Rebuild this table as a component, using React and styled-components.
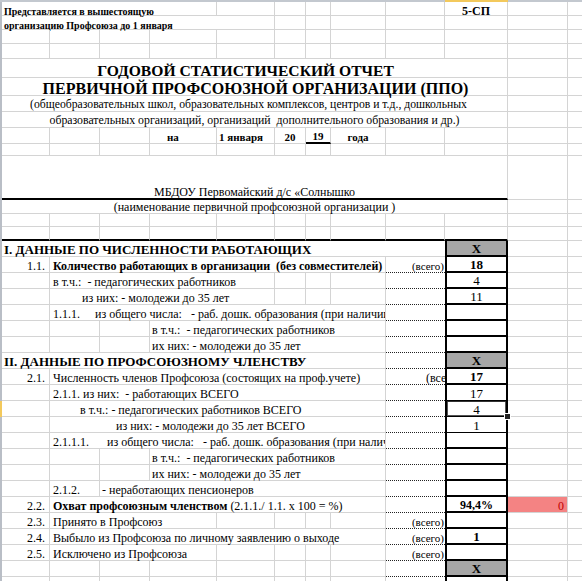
import React from 'react';
import styled, { createGlobalStyle, css } from 'styled-components';

// column widths: row-header strip, then A..L as in the sheet
const COLS = '2px 48px 50px 50px 67px 58px 31px 25px 55px 59px 63px 60px 60px';
const GRID = '#d4d4d4';
const SERIF = '"Liberation Serif", "Times New Roman", "DejaVu Serif", serif';

const GlobalStyle = createGlobalStyle`
  html, body {
    margin: 0;
    padding: 0;
    background: #fff;
  }
  body {
    font-family: ${SERIF};
    color: #000;
    overflow: hidden;
  }
`;

const Sheet = styled.div`
  width: 582px;
  height: 581px;
  overflow: hidden;
  font-family: ${SERIF};
`;

const HeadStrip = styled.div`
  display: grid;
  grid-template-columns: ${COLS};
  height: 2px;
`;

const HeadCell = styled.div`
  background: ${(p) => (p.$active ? '#f3c95c' : '#c3c8cf')};
`;

const Row = styled.div`
  display: grid;
  grid-template-columns: ${COLS};
  height: ${(p) => p.$h}px;
`;

const RowHead = styled.div`
  background: ${(p) => (p.$active ? '#f3c95c' : '#b9bec6')};
`;

const line = (v) => {
  if (v === 'thick') return '2px solid #000';
  if (v === 'ink') return '1px solid #000';
  if (v === 'dotted') return '1px dotted #222';
  if (v === 'none') return '0 none';
  return `1px solid ${GRID}`;
};

const Cell = styled.div`
  grid-column: ${(p) => p.$c + 1} / span ${(p) => p.$span};
  box-sizing: border-box;
  min-width: 0;
  position: relative;
  overflow-x: ${(p) => (p.$sel ? 'visible' : 'clip')};
  white-space: pre;
  display: flex;
  align-items: flex-end;
  justify-content: ${(p) =>
    p.$align === 'center' ? 'center' : p.$align === 'right' ? 'flex-end' : 'flex-start'};
  padding: 0 ${(p) => p.$padR}px ${(p) => p.$padB}px ${(p) => p.$pad}px;
  border-right: ${(p) => line(p.$right)};
  border-bottom: ${(p) => line(p.$under)};
  font-family: ${SERIF};
  font-size: ${(p) => p.$size}px;
  font-weight: ${(p) => (p.$bold ? 700 : 400)};
  line-height: ${(p) => p.$lh};
  background: ${(p) => p.$fill || 'transparent'};
  color: ${(p) => p.$color || '#000'};
  ${(p) =>
    p.$box &&
    css`
      border-left: 2px solid #000;
      border-right: 2px solid #000;
    `}
  ${(p) =>
    p.$sel &&
    css`
      z-index: 1;
      box-shadow: inset 0 1px 0 #333, inset 0 0 0 1px #555;
    `}
`;

const Handle = styled.span`
  position: absolute;
  right: -5px;
  bottom: -4px;
  width: 5px;
  height: 5px;
  background: #222;
  border: 1px solid #fff;
  z-index: 2;
`;

const T = (c, span, text, o = {}) => ({ c, span, text, ...o });
const X = T(10, 1, 'X', { bold: true, size: 13, align: 'center', fill: '#a6a6a6' });
const num = (n, o = {}) => T(10, 1, n, { size: 13, align: 'center', ...o });
const vsego = T(9, 1, '(всего)', { size: 11, align: 'right', padR: 1 });
const no = (n) => T(1, 1, n, { align: 'right', padR: 4 });

const topRows = [
  {
    h: 14,
    cells: [
      T(1, 4, 'Представляется в вышестоящую', { bold: true, size: 10, lh: 0.6 }),
      T(10, 1, '5-СП', { bold: true, size: 12, align: 'center', lh: 0.7 }),
    ],
  },
  { h: 14, cells: [T(1, 5, 'организацию Профсоюза до 1 января', { bold: true, size: 10, lh: 0.6 })] },
  { h: 14 },
  { h: 15 },
  {
    h: 19,
    cells: [
      T(1, 10, 'ГОДОВОЙ СТАТИСТИЧЕСКИЙ ОТЧЕТ', {
        bold: true,
        size: 15.6,
        align: 'center',
        padR: 20,
        lh: 0.75,
      }),
    ],
  },
  {
    h: 18,
    cells: [
      T(1, 10, 'ПЕРВИЧНОЙ ПРОФСОЮЗНОЙ ОРГАНИЗАЦИИ (ППО)', {
        bold: true,
        size: 16,
        align: 'center',
        padR: 0,
        lh: 0.75,
      }),
    ],
  },
  {
    h: 16,
    cells: [
      T(1, 10, '(общеобразовательных школ, образовательных комплексов, центров и т.д., дошкольных', {
        align: 'center',
        padR: 14,
        size: 11.7,
      }),
    ],
  },
  {
    h: 16,
    cells: [
      T(1, 10, 'образовательных организаций, организаций  дополнительного образования и др.)', {
        align: 'center',
        size: 11.8,
      }),
    ],
  },
  {
    h: 16,
    cells: [
      T(4, 1, 'на', { bold: true, size: 11, pad: 17 }),
      T(5, 1, '1 января', { bold: true, size: 11 }),
      T(6, 1, '20', { bold: true, size: 11, align: 'center' }),
      T(7, 1, '19', { bold: true, size: 11, align: 'center', under: 'thick' }),
      T(8, 1, 'года', { bold: true, size: 11, align: 'center' }),
    ],
  },
  { h: 12 },
  {
    h: 44,
    cells: [T(1, 10, 'МБДОУ Первомайский д/с «Солнышко', { align: 'center', under: 'thick', lh: 0.8 })],
  },
  { h: 14, cells: [T(1, 10, '(наименование первичной профсоюзной организации )', { align: 'center' })] },
  { h: 13 },
  { h: 14, rule: true },
];

const dataRows = [
  { cells: [T(1, 9, 'I. ДАННЫЕ ПО ЧИСЛЕННОСТИ РАБОТАЮЩИХ', { bold: true, size: 13 }), X] },
  {
    cells: [
      no('1.1.'),
      T(2, 7, 'Количество работающих в организации  (без совместителей)', { bold: true, pad: 3 }),
      vsego,
      num('18', { bold: true }),
    ],
  },
  { cells: [T(2, 4, 'в т.ч.:  - педагогических работников', { pad: 3 }), num('4')] },
  { cells: [T(2, 4, 'из них: - молодежи до 35 лет', { pad: 32 }), num('11')] },
  {
    cells: [
      T(2, 7, '1.1.1.     из общего числа:   - раб. дошк. образования (при наличии)', { pad: 3 }),
    ],
  },
  { cells: [T(4, 5, 'в т.ч.:  - педагогических работников')] },
  { cells: [T(4, 5, 'их них: - молодежи до 35 лет')] },
  { cells: [T(1, 8, 'II. ДАННЫЕ ПО ПРОФСОЮЗНОМУ ЧЛЕНСТВУ', { bold: true, size: 13 }), X] },
  {
    cells: [
      no('2.1.'),
      T(2, 7, 'Численность членов Профсоюза (состоящих на проф.учете)', { pad: 3 }),
      T(9, 1, '(всего)', { pad: 40 }),
      num('17', { bold: true }),
    ],
  },
  { cells: [T(2, 7, '2.1.1. из них:  - работающих ВСЕГО', { pad: 3 }), num('17', { under: 'ink' })] },
  {
    active: true,
    cells: [
      T(2, 7, 'в т.ч.: - педагогических работников ВСЕГО', { pad: 30 }),
      num('4', { sel: true, under: 'ink' }),
    ],
  },
  { cells: [T(2, 7, 'из них: - молодежи до 35 лет ВСЕГО', { pad: 66 }), num('1', { under: 'ink' })] },
  {
    cells: [
      T(2, 7, '2.1.1.1.      из общего числа:   - раб. дошк. образования (при наличии)', { pad: 3 }),
    ],
  },
  { cells: [T(4, 5, 'в т.ч.:  - педагогических работников')] },
  { cells: [T(4, 5, 'их них: - молодежи до 35 лет')] },
  { cells: [T(2, 1, '2.1.2.', { pad: 3 }), T(3, 6, '- неработающих пенсионеров')] },
  {
    cells: [
      no('2.2.'),
      T(
        2,
        7,
        <>
          <b>Охват профсоюзным членством</b> (2.1.1./ 1.1. х 100 = %)
        </>,
        { pad: 3 }
      ),
      num('94,4%', { bold: true, size: 12 }),
      T(11, 1, '0', { fill: '#f48383', color: '#c00000', align: 'right', padR: 3, right: 'fill' }),
    ],
  },
  { cells: [no('2.3.'), T(2, 3, 'Принято в Профсоюз', { pad: 3 }), vsego] },
  {
    cells: [
      no('2.4.'),
      T(2, 7, 'Выбыло из Профсоюза по личному заявлению о выходе', { pad: 3 }),
      vsego,
      num('1', { bold: true }),
    ],
  },
  { cells: [no('2.5.'), T(2, 3, 'Исключено из Профсоюза', { pad: 3 }), vsego] },
  { cells: [X] },
  { cells: [num('', { under: 'none' })] },
];

function fillRow(row, data) {
  const specs = row.cells || [];
  const out = [];
  let c = 1;
  while (c <= 12) {
    const s = specs.find((x) => x.c === c);
    const cell = s ? { ...s } : { c, span: 1 };
    const end = cell.c + cell.span - 1;
    if (row.rule && cell.c <= 10) cell.under = cell.under || 'thick';
    if (data) {
      if (cell.c === 10) {
        cell.box = true;
        cell.under = cell.under || 'thick';
      } else if (end === 9) {
        cell.right = 'none';
        if (cell.c === 9) cell.under = cell.under || 'dotted';
      }
    }
    out.push(cell);
    c = end + 1;
  }
  return out;
}

function SheetRow({ row, h, data }) {
  return (
    <Row $h={h}>
      <RowHead $active={row.active} />
      {fillRow(row, data).map((cell) => (
        <Cell
          key={cell.c}
          $c={cell.c}
          $span={cell.span}
          $align={cell.align}
          $pad={cell.pad ?? 2}
          $padR={cell.padR ?? 2}
          $padB={cell.padB ?? 0}
          $lh={cell.lh ?? 1}
          $size={cell.size || 12}
          $bold={cell.bold}
          $under={cell.under}
          $right={cell.right}
          $fill={cell.fill}
          $color={cell.color}
          $box={cell.box}
          $sel={cell.sel}
        >
          <span>{cell.text}</span>
          {cell.sel && <Handle />}
        </Cell>
      ))}
    </Row>
  );
}

export default function App() {
  return (
    <>
      <GlobalStyle />
      <Sheet>
        <HeadStrip>
          {Array.from({ length: 13 }, (_, i) => (
            <HeadCell key={i} $active={i === 10} />
          ))}
        </HeadStrip>
        {topRows.map((row, i) => (
          <SheetRow key={'t' + i} row={row} h={row.h} />
        ))}
        {dataRows.map((row, i) => (
          <SheetRow key={'d' + i} row={row} h={16} data />
        ))}
      </Sheet>
    </>
  );
}
